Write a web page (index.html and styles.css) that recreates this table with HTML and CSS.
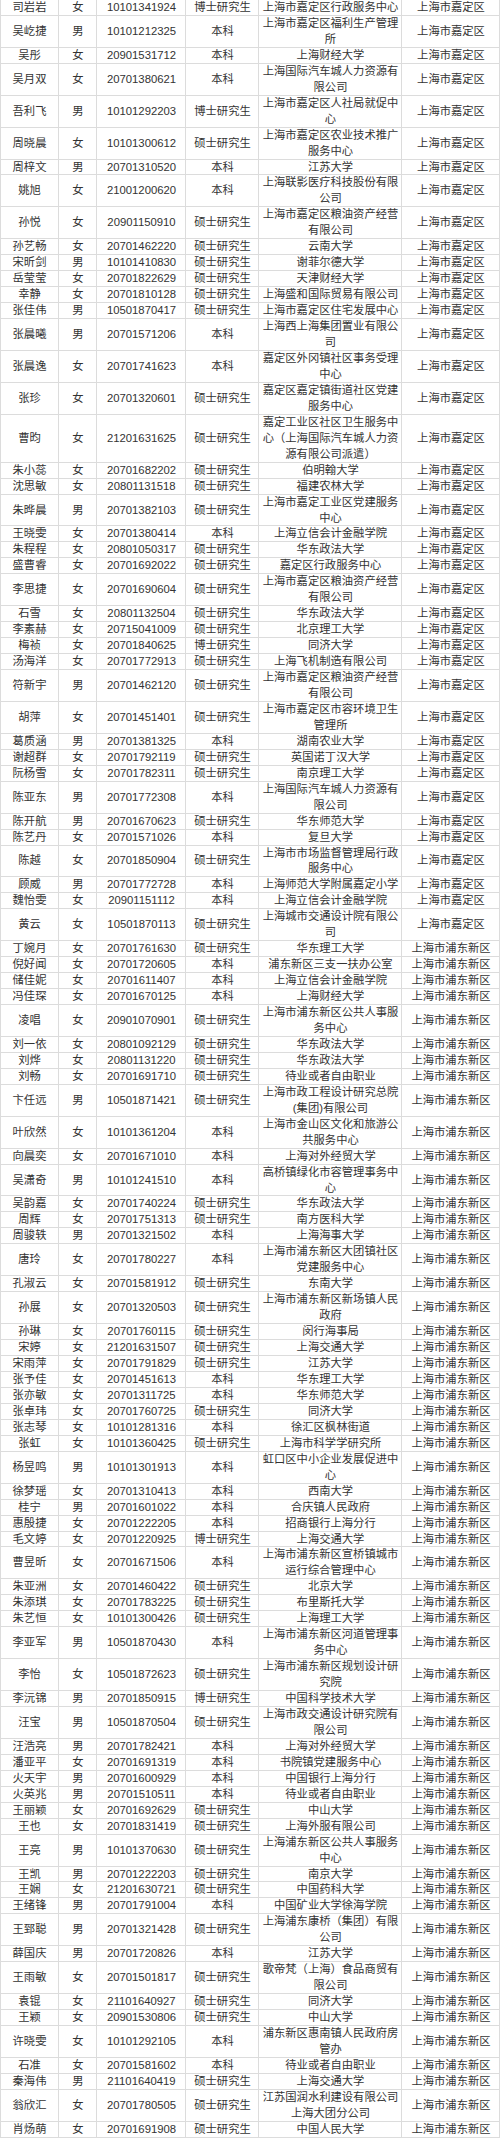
FILE: index.html
```html
<!DOCTYPE html>
<html lang="zh-CN">
<head>
<meta charset="utf-8">
<title>名单</title>
<link rel="stylesheet" href="styles.css">
</head>
<body>
<div class="t">
<div class="r"><span>司岩岩</span><span>女</span><span>10101341924</span><span>博士研究生</span><span>上海市嘉定区行政服务中心</span><span>上海市嘉定区</span></div>
<div class="r"><span>吴屹捷</span><span>男</span><span>10101212325</span><span>本科</span><span>上海市嘉定区福利生产管理所</span><span>上海市嘉定区</span></div>
<div class="r"><span>吴彤</span><span>女</span><span>20901531712</span><span>本科</span><span>上海财经大学</span><span>上海市嘉定区</span></div>
<div class="r"><span>吴月双</span><span>女</span><span>20701380621</span><span>本科</span><span>上海国际汽车城人力资源有限公司</span><span>上海市嘉定区</span></div>
<div class="r"><span>吾利飞</span><span>男</span><span>10101292203</span><span>博士研究生</span><span>上海市嘉定区人社局就促中心</span><span>上海市嘉定区</span></div>
<div class="r"><span>周晓晨</span><span>女</span><span>10101300612</span><span>硕士研究生</span><span>上海市嘉定区农业技术推广服务中心</span><span>上海市嘉定区</span></div>
<div class="r"><span>周梓文</span><span>男</span><span>20701310520</span><span>本科</span><span>江苏大学</span><span>上海市嘉定区</span></div>
<div class="r"><span>姚旭</span><span>女</span><span>21001200620</span><span>本科</span><span>上海联影医疗科技股份有限公司</span><span>上海市嘉定区</span></div>
<div class="r"><span>孙悦</span><span>女</span><span>20901150910</span><span>硕士研究生</span><span>上海市嘉定区粮油资产经营有限公司</span><span>上海市嘉定区</span></div>
<div class="r"><span>孙艺畅</span><span>女</span><span>20701462220</span><span>硕士研究生</span><span>云南大学</span><span>上海市嘉定区</span></div>
<div class="r"><span>宋昕剑</span><span>男</span><span>10101410830</span><span>硕士研究生</span><span>谢菲尔德大学</span><span>上海市嘉定区</span></div>
<div class="r"><span>岳莹莹</span><span>女</span><span>20701822629</span><span>硕士研究生</span><span>天津财经大学</span><span>上海市嘉定区</span></div>
<div class="r"><span>幸静</span><span>女</span><span>20701810128</span><span>硕士研究生</span><span>上海盛和国际贸易有限公司</span><span>上海市嘉定区</span></div>
<div class="r"><span>张佳伟</span><span>男</span><span>10501870417</span><span>硕士研究生</span><span>上海市嘉定区住宅发展中心</span><span>上海市嘉定区</span></div>
<div class="r"><span>张晨曦</span><span>男</span><span>20701571206</span><span>本科</span><span>上海西上海集团置业有限公司</span><span>上海市嘉定区</span></div>
<div class="r"><span>张晨逸</span><span>女</span><span>20701741623</span><span>本科</span><span>嘉定区外冈镇社区事务受理中心</span><span>上海市嘉定区</span></div>
<div class="r"><span>张珍</span><span>女</span><span>20701320601</span><span>硕士研究生</span><span>嘉定区嘉定镇街道社区党建服务中心</span><span>上海市嘉定区</span></div>
<div class="r"><span>曹昀</span><span>女</span><span>21201631625</span><span>硕士研究生</span><span>嘉定工业区社区卫生服务中心（上海国际汽车城人力资源有限公司派遣）</span><span>上海市嘉定区</span></div>
<div class="r"><span>朱小蕊</span><span>女</span><span>20701682202</span><span>硕士研究生</span><span>伯明翰大学</span><span>上海市嘉定区</span></div>
<div class="r"><span>沈思敏</span><span>女</span><span>20801131518</span><span>硕士研究生</span><span>福建农林大学</span><span>上海市嘉定区</span></div>
<div class="r"><span>朱晔晨</span><span>男</span><span>20701382103</span><span>硕士研究生</span><span>上海市嘉定工业区党建服务中心</span><span>上海市嘉定区</span></div>
<div class="r"><span>王晓雯</span><span>女</span><span>20701380414</span><span>本科</span><span>上海立信会计金融学院</span><span>上海市嘉定区</span></div>
<div class="r"><span>朱程程</span><span>女</span><span>20801050317</span><span>硕士研究生</span><span>华东政法大学</span><span>上海市嘉定区</span></div>
<div class="r"><span>盛曹睿</span><span>女</span><span>20701692022</span><span>硕士研究生</span><span>嘉定区行政服务中心</span><span>上海市嘉定区</span></div>
<div class="r"><span>李思捷</span><span>女</span><span>20701690604</span><span>硕士研究生</span><span>上海市嘉定区粮油资产经营有限公司</span><span>上海市嘉定区</span></div>
<div class="r"><span>石雪</span><span>女</span><span>20801132504</span><span>硕士研究生</span><span>华东政法大学</span><span>上海市嘉定区</span></div>
<div class="r"><span>李素赫</span><span>女</span><span>20715041009</span><span>硕士研究生</span><span>北京理工大学</span><span>上海市嘉定区</span></div>
<div class="r"><span>梅祯</span><span>女</span><span>20701840625</span><span>博士研究生</span><span>同济大学</span><span>上海市嘉定区</span></div>
<div class="r"><span>汤海洋</span><span>女</span><span>20701772913</span><span>硕士研究生</span><span>上海飞机制造有限公司</span><span>上海市嘉定区</span></div>
<div class="r"><span>符新宇</span><span>男</span><span>20701462120</span><span>硕士研究生</span><span>上海市嘉定区粮油资产经营有限公司</span><span>上海市嘉定区</span></div>
<div class="r"><span>胡萍</span><span>女</span><span>20701451401</span><span>硕士研究生</span><span>上海市嘉定区市容环境卫生管理所</span><span>上海市嘉定区</span></div>
<div class="r"><span>葛质涵</span><span>男</span><span>20701381325</span><span>本科</span><span>湖南农业大学</span><span>上海市嘉定区</span></div>
<div class="r"><span>谢超群</span><span>女</span><span>20701792119</span><span>硕士研究生</span><span>英国诺丁汉大学</span><span>上海市嘉定区</span></div>
<div class="r"><span>阮杨雪</span><span>女</span><span>20701782311</span><span>硕士研究生</span><span>南京理工大学</span><span>上海市嘉定区</span></div>
<div class="r"><span>陈亚东</span><span>男</span><span>20701772308</span><span>本科</span><span>上海国际汽车城人力资源有限公司</span><span>上海市嘉定区</span></div>
<div class="r"><span>陈开航</span><span>男</span><span>20701670623</span><span>硕士研究生</span><span>华东师范大学</span><span>上海市嘉定区</span></div>
<div class="r"><span>陈艺丹</span><span>女</span><span>20701571026</span><span>本科</span><span>复旦大学</span><span>上海市嘉定区</span></div>
<div class="r"><span>陈越</span><span>女</span><span>20701850904</span><span>硕士研究生</span><span>上海市市场监督管理局行政服务中心</span><span>上海市嘉定区</span></div>
<div class="r"><span>顾威</span><span>男</span><span>20701772728</span><span>本科</span><span>上海师范大学附属嘉定小学</span><span>上海市嘉定区</span></div>
<div class="r"><span>魏怡雯</span><span>女</span><span>20901151112</span><span>本科</span><span>上海立信会计金融学院</span><span>上海市嘉定区</span></div>
<div class="r"><span>黄云</span><span>女</span><span>10501870113</span><span>硕士研究生</span><span>上海城市交通设计院有限公司</span><span>上海市嘉定区</span></div>
<div class="r"><span>丁婉月</span><span>女</span><span>20701761630</span><span>硕士研究生</span><span>华东理工大学</span><span>上海市浦东新区</span></div>
<div class="r"><span>倪好闻</span><span>女</span><span>20701720605</span><span>本科</span><span>浦东新区三支一扶办公室</span><span>上海市浦东新区</span></div>
<div class="r"><span>储佳妮</span><span>女</span><span>20701611407</span><span>本科</span><span>上海立信会计金融学院</span><span>上海市浦东新区</span></div>
<div class="r"><span>冯佳琛</span><span>女</span><span>20701670125</span><span>本科</span><span>上海财经大学</span><span>上海市浦东新区</span></div>
<div class="r"><span>凌唱</span><span>女</span><span>20901070901</span><span>硕士研究生</span><span>上海市浦东新区公共人事服务中心</span><span>上海市浦东新区</span></div>
<div class="r"><span>刘一依</span><span>女</span><span>20801092129</span><span>硕士研究生</span><span>华东政法大学</span><span>上海市浦东新区</span></div>
<div class="r"><span>刘烨</span><span>女</span><span>20801131220</span><span>硕士研究生</span><span>华东政法大学</span><span>上海市浦东新区</span></div>
<div class="r"><span>刘畅</span><span>女</span><span>20701691710</span><span>硕士研究生</span><span>待业或者自由职业</span><span>上海市浦东新区</span></div>
<div class="r"><span>卞任远</span><span>男</span><span>10501871421</span><span>硕士研究生</span><span>上海市政工程设计研究总院(集团)有限公司</span><span>上海市浦东新区</span></div>
<div class="r"><span>叶欣然</span><span>女</span><span>10101361204</span><span>本科</span><span>上海市金山区文化和旅游公共服务中心</span><span>上海市浦东新区</span></div>
<div class="r"><span>向晨奕</span><span>女</span><span>20701671010</span><span>本科</span><span>上海对外经贸大学</span><span>上海市浦东新区</span></div>
<div class="r"><span>吴潇奇</span><span>男</span><span>10101241510</span><span>本科</span><span>高桥镇绿化市容管理事务中心</span><span>上海市浦东新区</span></div>
<div class="r"><span>吴韵嘉</span><span>女</span><span>20701740224</span><span>硕士研究生</span><span>华东政法大学</span><span>上海市浦东新区</span></div>
<div class="r"><span>周辉</span><span>女</span><span>20701751313</span><span>硕士研究生</span><span>南方医科大学</span><span>上海市浦东新区</span></div>
<div class="r"><span>周骏轶</span><span>男</span><span>20701321502</span><span>本科</span><span>上海海事大学</span><span>上海市浦东新区</span></div>
<div class="r"><span>唐玲</span><span>女</span><span>20701780227</span><span>本科</span><span>上海市浦东新区大团镇社区党建服务中心</span><span>上海市浦东新区</span></div>
<div class="r"><span>孔淑云</span><span>女</span><span>20701581912</span><span>硕士研究生</span><span>东南大学</span><span>上海市浦东新区</span></div>
<div class="r"><span>孙展</span><span>女</span><span>20701320503</span><span>硕士研究生</span><span>上海市浦东新区新场镇人民政府</span><span>上海市浦东新区</span></div>
<div class="r"><span>孙琳</span><span>女</span><span>20701760115</span><span>硕士研究生</span><span>闵行海事局</span><span>上海市浦东新区</span></div>
<div class="r"><span>宋婷</span><span>女</span><span>21201631507</span><span>硕士研究生</span><span>上海交通大学</span><span>上海市浦东新区</span></div>
<div class="r"><span>宋雨萍</span><span>女</span><span>20701791829</span><span>硕士研究生</span><span>江苏大学</span><span>上海市浦东新区</span></div>
<div class="r"><span>张予佳</span><span>女</span><span>20701451613</span><span>本科</span><span>华东理工大学</span><span>上海市浦东新区</span></div>
<div class="r"><span>张亦敏</span><span>女</span><span>20701311725</span><span>本科</span><span>华东师范大学</span><span>上海市浦东新区</span></div>
<div class="r"><span>张卓玮</span><span>女</span><span>20701760725</span><span>硕士研究生</span><span>同济大学</span><span>上海市浦东新区</span></div>
<div class="r"><span>张志琴</span><span>女</span><span>10101281316</span><span>本科</span><span>徐汇区枫林街道</span><span>上海市浦东新区</span></div>
<div class="r"><span>张虹</span><span>女</span><span>10101360425</span><span>硕士研究生</span><span>上海市科学学研究所</span><span>上海市浦东新区</span></div>
<div class="r"><span>杨昱鸣</span><span>男</span><span>10101301913</span><span>本科</span><span>虹口区中小企业发展促进中心</span><span>上海市浦东新区</span></div>
<div class="r"><span>徐梦瑶</span><span>女</span><span>20701310413</span><span>本科</span><span>西南大学</span><span>上海市浦东新区</span></div>
<div class="r"><span>桂宁</span><span>男</span><span>20701601022</span><span>本科</span><span>合庆镇人民政府</span><span>上海市浦东新区</span></div>
<div class="r"><span>惠殷捷</span><span>女</span><span>20701222205</span><span>本科</span><span>招商银行上海分行</span><span>上海市浦东新区</span></div>
<div class="r"><span>毛文婷</span><span>女</span><span>20701220925</span><span>博士研究生</span><span>上海交通大学</span><span>上海市浦东新区</span></div>
<div class="r"><span>曹昱昕</span><span>女</span><span>20701671506</span><span>本科</span><span>上海市浦东新区宣桥镇城市运行综合管理中心</span><span>上海市浦东新区</span></div>
<div class="r"><span>朱亚洲</span><span>女</span><span>20701460422</span><span>硕士研究生</span><span>北京大学</span><span>上海市浦东新区</span></div>
<div class="r"><span>朱添琪</span><span>女</span><span>20701783225</span><span>硕士研究生</span><span>布里斯托大学</span><span>上海市浦东新区</span></div>
<div class="r"><span>朱艺恒</span><span>女</span><span>10101300426</span><span>硕士研究生</span><span>上海理工大学</span><span>上海市浦东新区</span></div>
<div class="r"><span>李亚军</span><span>男</span><span>10501870430</span><span>本科</span><span>上海市浦东新区河道管理事务中心</span><span>上海市浦东新区</span></div>
<div class="r"><span>李怡</span><span>女</span><span>10501872623</span><span>硕士研究生</span><span>上海市浦东新区规划设计研究院</span><span>上海市浦东新区</span></div>
<div class="r"><span>李沅锦</span><span>男</span><span>20701850915</span><span>博士研究生</span><span>中国科学技术大学</span><span>上海市浦东新区</span></div>
<div class="r"><span>汪宝</span><span>男</span><span>10501870504</span><span>硕士研究生</span><span>上海市政交通设计研究院有限公司</span><span>上海市浦东新区</span></div>
<div class="r"><span>汪浩亮</span><span>男</span><span>20701782421</span><span>本科</span><span>上海对外经贸大学</span><span>上海市浦东新区</span></div>
<div class="r"><span>潘亚平</span><span>女</span><span>20701691319</span><span>本科</span><span>书院镇党建服务中心</span><span>上海市浦东新区</span></div>
<div class="r"><span>火天宇</span><span>男</span><span>20701600929</span><span>本科</span><span>中国银行上海分行</span><span>上海市浦东新区</span></div>
<div class="r"><span>火英兆</span><span>男</span><span>20701510511</span><span>本科</span><span>待业或者自由职业</span><span>上海市浦东新区</span></div>
<div class="r"><span>王丽颖</span><span>女</span><span>20701692629</span><span>硕士研究生</span><span>中山大学</span><span>上海市浦东新区</span></div>
<div class="r"><span>王也</span><span>女</span><span>20701831419</span><span>硕士研究生</span><span>上海外服有限公司</span><span>上海市浦东新区</span></div>
<div class="r"><span>王亮</span><span>男</span><span>10101370630</span><span>硕士研究生</span><span>上海浦东新区公共人事服务中心</span><span>上海市浦东新区</span></div>
<div class="r"><span>王凯</span><span>男</span><span>20701222203</span><span>硕士研究生</span><span>南京大学</span><span>上海市浦东新区</span></div>
<div class="r"><span>王娴</span><span>女</span><span>21201630721</span><span>硕士研究生</span><span>中国药科大学</span><span>上海市浦东新区</span></div>
<div class="r"><span>王绪锋</span><span>男</span><span>20701791004</span><span>本科</span><span>中国矿业大学徐海学院</span><span>上海市浦东新区</span></div>
<div class="r"><span>王郅聪</span><span>男</span><span>20701321428</span><span>硕士研究生</span><span>上海浦东康桥（集团）有限公司</span><span>上海市浦东新区</span></div>
<div class="r"><span>薛国庆</span><span>男</span><span>20701720826</span><span>本科</span><span>江苏大学</span><span>上海市浦东新区</span></div>
<div class="r"><span>王雨敏</span><span>女</span><span>20701501817</span><span>硕士研究生</span><span>歌帝梵（上海）食品商贸有限公司</span><span>上海市浦东新区</span></div>
<div class="r"><span>袁锟</span><span>女</span><span>21101640927</span><span>硕士研究生</span><span>同济大学</span><span>上海市浦东新区</span></div>
<div class="r"><span>王颖</span><span>女</span><span>20901530806</span><span>硕士研究生</span><span>中山大学</span><span>上海市浦东新区</span></div>
<div class="r"><span>许晓雯</span><span>女</span><span>10101292105</span><span>本科</span><span>浦东新区惠南镇人民政府房管办</span><span>上海市浦东新区</span></div>
<div class="r"><span>石准</span><span>女</span><span>20701581602</span><span>本科</span><span>待业或者自由职业</span><span>上海市浦东新区</span></div>
<div class="r"><span>秦海伟</span><span>男</span><span>21101640419</span><span>硕士研究生</span><span>上海交通大学</span><span>上海市浦东新区</span></div>
<div class="r"><span>翁欣汇</span><span>女</span><span>20701780505</span><span>硕士研究生</span><span>江苏国润水利建设有限公司上海大团分公司</span><span>上海市浦东新区</span></div>
<div class="r"><span>肖炀萌</span><span>女</span><span>20701691908</span><span>硕士研究生</span><span>中国人民大学</span><span>上海市浦东新区</span></div>
</div>
</body>
</html>
```
FILE: styles.css
```css
html, body {
  margin: 0;
  padding: 0;
  background: #ffffff;
}

.t {
  width: 500px;
  font-family: "Liberation Sans", "Noto Sans CJK SC", sans-serif;
  font-size: 11.3px;
  color: #333333;
}

.r {
  display: grid;
  grid-template-columns: 59px 38px 89px 73px 143px 98px;
}

.r span {
  display: flex;
  align-items: center;
  justify-content: center;
  text-align: center;
  line-height: 15.95px;
  padding: 0 2px;
  box-shadow: inset -1px -1px 0 #dcdcdc;
}

.r span:first-child {
  box-shadow: inset 1px 0 0 #dcdcdc, inset -1px -1px 0 #dcdcdc;
}
```
